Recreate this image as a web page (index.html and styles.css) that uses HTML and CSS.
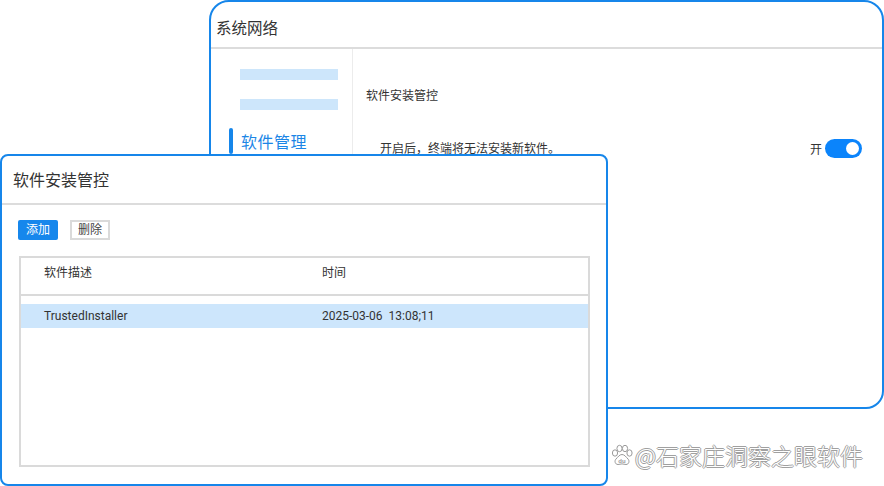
FILE: index.html
```html
<!DOCTYPE html>
<html lang="zh-CN">
<head>
<meta charset="utf-8">
<link rel="stylesheet" href="styles.css">
</head>
<body>
<div class="desk">
  <section class="win back">
    <header class="back-head">系统网络</header>
    <div class="back-body">
      <nav class="side">
        <div class="side-bar"></div>
        <div class="side-bar"></div>
        <div class="side-item active"><span class="ind"></span>软件管理</div>
      </nav>
      <div class="content">
        <div class="sec-title">软件安装管控</div>
        <div class="opt-row">
          <span class="opt-text">开启后，终端将无法安装新软件。</span>
          <span class="opt-ctrl"><span class="opt-label">开</span><span class="toggle"><span class="knob"></span></span></span>
        </div>
      </div>
    </div>
  </section>

  <section class="win front">
    <header class="front-head">软件安装管控</header>
    <div class="front-body">
      <div class="btns">
        <button class="btn primary">添加</button>
        <button class="btn plain">删除</button>
      </div>
      <div class="table">
        <div class="thead">
          <span class="c1">软件描述</span>
          <span class="c2">时间</span>
        </div>
        <div class="row sel">
          <span class="c1">TrustedInstaller</span>
          <span class="c2">2025-03-06&nbsp;&nbsp;13:08;11</span>
        </div>
      </div>
    </div>
  </section>

  <div class="mark">
    <svg class="paw" width="22" height="22" viewBox="0 0 22 22">
      <g fill="#fff" stroke="#9a9a9a" stroke-width="1">
        <ellipse cx="4" cy="9" rx="2.6" ry="3.2"/>
        <ellipse cx="8.5" cy="4.5" rx="2.6" ry="3.2"/>
        <ellipse cx="14" cy="4.5" rx="2.6" ry="3.2"/>
        <ellipse cx="18.5" cy="9" rx="2.6" ry="3.2"/>
        <path d="M11 10.5c-2.5 0-4 2.5-6 4.5-1.8 1.8-1 5.5 2 5.5 1.5 0 2.5-.6 4-.6s2.5.6 4 .6c3 0 3.8-3.7 2-5.5-2-2-3.5-4.5-6-4.5z"/>
      </g>
      <text x="11" y="18.6" text-anchor="middle" font-size="6" font-family="Liberation Sans, sans-serif" font-weight="bold" fill="#9a9a9a">du</text>
    </svg>
    <span class="mark-text">@石家庄洞察之眼软件</span>
  </div>
</div>
</body>
</html>
```

FILE: styles.css
```css
* { box-sizing: border-box; }
html, body { margin: 0; padding: 0; }
body {
  width: 884px;
  height: 486px;
  background: #fff;
  font-family: Roboto, "Noto Sans CJK SC", sans-serif;
  color: #333;
  overflow: hidden;
}
.desk { position: relative; width: 884px; height: 486px; }

.win {
  position: absolute;
  background: #fff;
  border: 2px solid #1686ea;
  display: flex;
  flex-direction: column;
}

/* back window */
.back {
  left: 209px;
  top: 0;
  width: 675px;
  height: 409px;
  border-radius: 20px 20px 18px 18px;
}
.back-head {
  height: 47px;
  border-bottom: 2px solid #dcdcdc;
  padding: 17px 0 0 5px;
  font-size: 15.5px;
  line-height: 20px;
  color: #333;
}
.back-body { flex: 1; display: flex; }
.side {
  width: 142px;
  border-right: 1px solid #ececec;
  display: flex;
  flex-direction: column;
  padding: 20px 0 0 18px;
}
.side-bar {
  margin-left: 11px;
  width: 98px;
  height: 11px;
  background: #cde6fb;
  margin-bottom: 19px;
}
.side-item {
  display: flex;
  align-items: center;
  height: 26px;
  margin-top: -1px;
  font-size: 16px;
  color: #1c86e6;
  letter-spacing: 0.5px;
}
.ind {
  width: 4px;
  height: 26px;
  background: #1686ea;
  border-radius: 2px;
  margin-right: 8px;
}
.content { flex: 1; padding: 39px 20px 0 13px; }
.sec-title { font-size: 12px; line-height: 16px; }
.opt-row {
  margin-top: 35px;
  padding-left: 14px;
  display: flex;
  align-items: center;
  justify-content: space-between;
  font-size: 12px;
}
.opt-text { line-height: 16px; }
.opt-ctrl { display: flex; align-items: center; gap: 3px; }
.opt-label { font-size: 12px; }
.toggle {
  width: 37px;
  height: 19px;
  border-radius: 10px;
  background: #0b84fb;
  display: flex;
  justify-content: flex-end;
  align-items: center;
  padding-right: 3px;
}
.knob { width: 13px; height: 13px; border-radius: 50%; background: #fff; }

/* front window */
.front {
  left: 0;
  top: 154px;
  width: 608px;
  height: 332px;
  border-radius: 8px;
}
.front-head {
  height: 49px;
  border-bottom: 2px solid #dcdcdc;
  padding: 14px 0 0 11px;
  font-size: 16px;
  line-height: 22px;
  color: #333;
}
.front-body { flex: 1; padding: 15px 16px 0 16px; }
.btns { display: flex; gap: 12px; }
.btn {
  width: 40px;
  height: 20px;
  padding: 0;
  font-family: inherit;
  font-size: 12px;
  line-height: 16px;
  border-radius: 2px;
}
.primary { background: #1687ec; color: #fff; border: none; }
.plain { background: #fff; color: #444; border: 2px solid #dadada; border-radius: 0; }
.table {
  margin-top: 16px;
  margin-left: 1px;
  width: 571px;
  height: 211px;
  border: 2px solid #dadada;
}
.thead {
  height: 38px;
  border-bottom: 2px solid #dadada;
  display: flex;
  align-items: flex-start;
  padding-top: 7px;
  font-size: 12px;
  line-height: 16px;
}
.row {
  margin-top: 8px;
  height: 24px;
  display: flex;
  align-items: center;
  font-size: 12px;
}
.sel { background: #cde6fc; }
.c1 { width: 301px; padding-left: 23px; }
.c2 { flex: 1; }

/* watermark */
.mark {
  position: absolute;
  left: 611px;
  top: 440px;
  display: flex;
  align-items: center;
  gap: 2px;
}
.mark-text {
  font-size: 23px;
  line-height: 30px;
  font-weight: 300;
  color: #fff;
  text-shadow: 1px 0 #a0a0a0, -1px 0 #a0a0a0, 0 1px #a0a0a0, 0 -1px #a0a0a0;
  font-family: "Noto Sans CJK SC", sans-serif;
  letter-spacing: 0;
}
```
